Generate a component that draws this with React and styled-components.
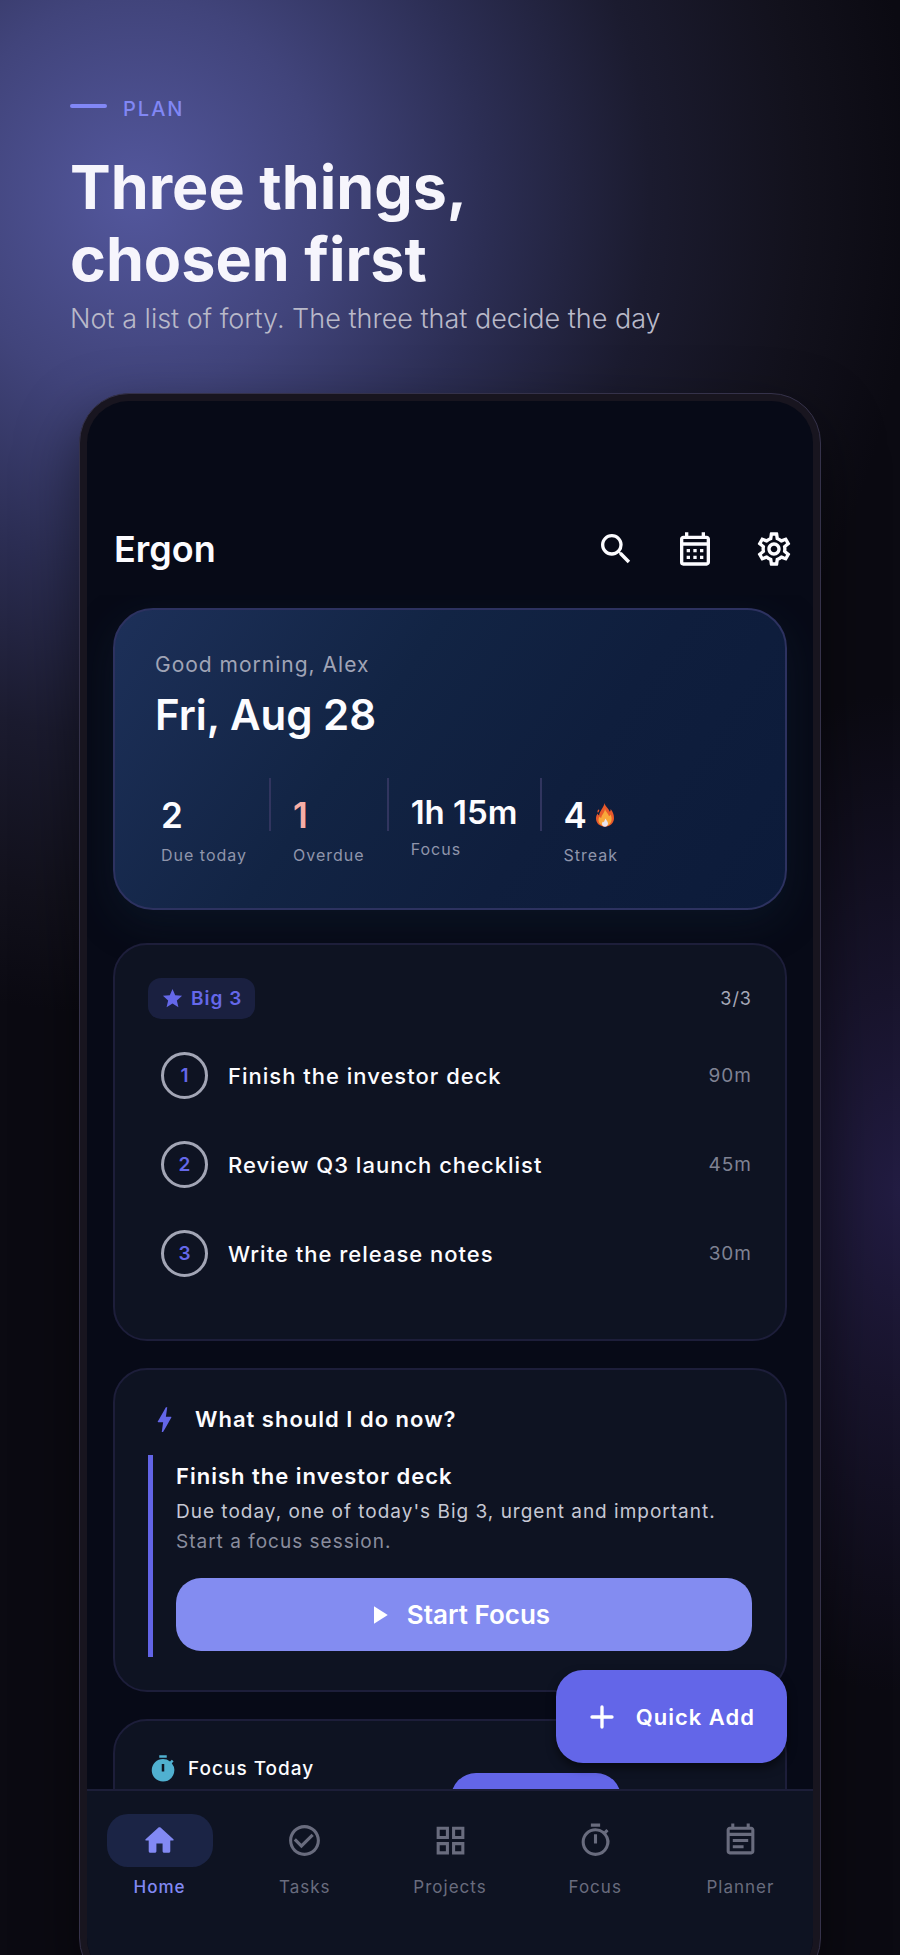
import React from 'react'
import styled, { createGlobalStyle } from 'styled-components'
import {
  MdSearch,
  MdOutlineCalendarMonth,
  MdOutlineSettings,
  MdStar,
  MdBolt,
  MdPlayArrow,
  MdTimer,
  MdOutlineTimer,
  MdCheckCircleOutline,
  MdOutlineGridView,
  MdOutlineEventNote,
} from 'react-icons/md'

const GlobalStyle = createGlobalStyle`
  * {
    box-sizing: border-box;
  }
  body {
    margin: 0;
    background: #0b0a12;
  }
  h1, h2, h3, p, ol, dl, dd {
    margin: 0;
    padding: 0;
  }
  button {
    border: none;
    padding: 0;
    font-family: inherit;
    cursor: pointer;
  }
  svg {
    display: block;
    flex: none;
  }
`

const Page = styled.div`
  display: flex;
  flex-direction: column;
  height: 100vh;
  overflow: hidden;
  background:
    radial-gradient(ellipse 300px 500px at 100% 61%, #221c42 0%, #18142c 40%, transparent 100%),
    radial-gradient(ellipse 780px 820px at 15% 10%, #53579d 0%, #41447b 24%, #2c2e54 45%, #1b1b2f 66%, #12111c 86%, transparent 100%),
    #0b0a12;
  font-family: Inter, "Liberation Sans", sans-serif;
`

const Intro = styled.header`
  padding: 95px 70px 0;
`

const Eyebrow = styled.p`
  display: flex;
  align-items: center;
  gap: 16px;
  color: #8187f5;
  font-size: 20px;
  font-weight: 500;
  line-height: 28px;
  letter-spacing: 2px;
`

const Dash = styled.span`
  width: 37px;
  height: 4px;
  margin-bottom: 6px;
  border-radius: 2px;
  background: #8187f5;
`

const Headline = styled.h1`
  margin-top: 28px;
  color: #f6f5fc;
  font-size: 61px;
  font-weight: 700;
  line-height: 72px;
`

const Tagline = styled.p`
  margin-top: 6px;
  color: #b9b9c9;
  font-size: 27px;
  font-weight: 300;
  line-height: 36px;
`

const Phone = styled.main`
  display: flex;
  flex: 1;
  min-height: 0;
  margin: 56px 79px -33px;
  padding: 7px;
  border: 1px solid #35324a;
  border-radius: 50px;
  background: #18151f;
  box-shadow: 0 24px 60px rgba(0, 0, 0, 0.5);
`

const Screen = styled.div`
  display: flex;
  flex: 1;
  flex-direction: column;
  min-width: 0;
  overflow: hidden;
  border-radius: 42px;
  background: #070a17;
  color: #fcfcff;
`

const AppBar = styled.div`
  display: flex;
  align-items: center;
  height: 194px;
  flex: none;
  padding: 102px 0 0 27px;
`

const AppName = styled.h2`
  flex: 1;
  font-size: 36px;
  font-weight: 600;
  line-height: 44px;
`

const IconButton = styled.button`
  display: flex;
  align-items: center;
  justify-content: center;
  width: 79px;
  height: 80px;
  background: none;
  color: #fcfcff;
  font-size: 40px;
`

const Body = styled.div`
  position: relative;
  display: flex;
  flex: 1;
  min-height: 0;
`

const Feed = styled.div`
  flex: 1;
  min-width: 0;
  padding: 13px 26px 0;
  overflow: hidden;
`

const Hero = styled.section`
  margin-bottom: 33px;
  padding: 40px 40px 41px;
  border: 2px solid #2d3260;
  border-radius: 40px;
  background: linear-gradient(125deg, #1d3059 0%, #122444 38%, #0f1e3d 65%, #0c1b3a 100%);
  box-shadow: 0 13px 40px rgba(18, 40, 60, 0.35);
`

const Greeting = styled.p`
  color: #a0a4b6;
  font-size: 21px;
  line-height: 30px;
  letter-spacing: 1px;
`

const Today = styled.h2`
  margin-top: 10px;
  font-size: 42px;
  font-weight: 600;
  line-height: 50px;
`

const Stats = styled.dl`
  display: flex;
  align-items: flex-start;
  gap: 22px;
  margin-top: 38px;
  padding-left: 6px;
`

const Divider = styled.span`
  width: 2px;
  height: 53px;
  background: #31355f;
`

const Stat = styled.div`
  display: flex;
  flex-direction: column-reverse;
  gap: 6px;
  padding-top: 15px;
`

const StatValue = styled.dd`
  display: flex;
  align-items: center;
  gap: 8px;
  color: ${(props) => (props.$alert ? '#f7aea6' : '#fcfcff')};
  font-size: ${(props) => (props.$small ? '33px' : '35px')};
  font-weight: 600;
  line-height: ${(props) => (props.$small ? '38px' : '44px')};
`

const StatLabel = styled.dt`
  color: #8f95ab;
  font-size: 16px;
  line-height: 24px;
  letter-spacing: 1px;
`

const Card = styled.section`
  margin-bottom: 27px;
  padding: 33px;
  border: 2px solid #1d1e3a;
  border-radius: 34px;
  background: #0e1322;
`

const BigThreeHead = styled.div`
  display: flex;
  align-items: center;
  justify-content: space-between;
  margin-bottom: 12px;
`

const Chip = styled.h3`
  display: flex;
  align-items: center;
  gap: 7px;
  height: 41px;
  padding: 0 13px;
  border-radius: 13px;
  background: #1a2040;
  color: #6568ea;
  font-size: 19px;
  font-weight: 600;
  letter-spacing: 1px;
`

const Count = styled.span`
  color: #a6a9b8;
  font-size: 18px;
  letter-spacing: 1px;
`

const TaskList = styled.ol`
  padding-bottom: 8px;
  list-style: none;
`

const Task = styled.li`
  display: flex;
  align-items: center;
  gap: 20px;
  height: 89px;
  padding-left: 13px;
`

const Ring = styled.button`
  width: 47px;
  height: 47px;
  border: 3px solid #a2a5b5;
  border-radius: 50%;
  background: none;
  color: #6568ea;
  font-size: 19px;
  font-weight: 600;
`

const TaskName = styled.span`
  flex: 1;
  font-size: 22px;
  font-weight: 500;
  letter-spacing: 1px;
`

const Duration = styled.span`
  color: #7f8293;
  font-size: 19px;
  letter-spacing: 1px;
`

const CardTitle = styled.h3`
  display: flex;
  align-items: center;
  gap: ${(props) => (props.$small ? '10px' : '14px')};
  font-size: ${(props) => (props.$small ? '19px' : '22px')};
  font-weight: ${(props) => (props.$small ? 500 : 600)};
  line-height: ${(props) => (props.$small ? '30px' : '33px')};
  letter-spacing: 1px;
`

const Suggestion = styled.div`
  margin-top: 19px;
  padding: 6px 0 6px 23px;
  border-left: 5px solid #6264e6;
`

const SuggestionTitle = styled.h3`
  margin-bottom: 6px;
  font-size: 22px;
  font-weight: 600;
  line-height: 30px;
  letter-spacing: 1px;
`

const Reason = styled.p`
  color: ${(props) => (props.$muted ? '#8a8d9e' : '#c6c8d4')};
  font-size: 19px;
  line-height: 30px;
  letter-spacing: 1px;
`

const StartButton = styled.button`
  display: flex;
  align-items: center;
  justify-content: center;
  gap: 13px;
  width: 100%;
  height: 73px;
  margin-top: 21px;
  padding-right: 14px;
  border-radius: 25px;
  background: #838cf1;
  color: #ffffff;
  font-size: 26px;
  font-weight: 600;
`

const FocusGrid = styled.div`
  display: grid;
  grid-template-columns: 1fr 170px 131px;
  align-items: start;
`

const FocusButton = styled.button`
  height: 60px;
  margin-top: 19px;
  border-radius: 25px;
  background: #6366e8;
`

const QuickAdd = styled.button`
  position: absolute;
  right: 26px;
  bottom: 26px;
  display: flex;
  align-items: center;
  gap: 14px;
  height: 93px;
  padding: 0 32px 0 26px;
  border-radius: 27px;
  background: #6366e8;
  box-shadow: 0 5px 10px rgba(0, 0, 0, 0.5);
  color: #ffffff;
  font-size: 22px;
  font-weight: 600;
  letter-spacing: 1px;
`

const NavBar = styled.nav`
  display: flex;
  flex: none;
  height: 191px;
  padding-top: 23px;
  border-top: 2px solid #1c1e38;
  background: #0e1322;
`

const NavItem = styled.a`
  display: flex;
  flex: 1;
  flex-direction: column;
  align-items: center;
  gap: 8px;
  color: ${(props) => (props.$active ? '#8289f4' : '#696c7e')};
  font-size: 17px;
  font-weight: ${(props) => (props.$active ? 500 : 400)};
  line-height: 24px;
  letter-spacing: 1px;
  text-decoration: none;
`

const NavPill = styled.span`
  display: flex;
  align-items: center;
  justify-content: center;
  width: 106px;
  height: 53px;
  border-radius: 21px;
  background: ${(props) => (props.$active ? '#1b2445' : 'transparent')};
  font-size: 37px;
`

const HomeIcon = () => (
  <svg width="1em" height="1em" viewBox="0 0 24 24" fill="currentColor">
    <path d="M10 19v-5h4v5c0 .55.45 1 1 1h3c.55 0 1-.45 1-1v-7h1.700c.46 0 .68-.57.33-.87L12.670 3.600c-.38-.34-.96-.34-1.340 0l-8.360 7.530c-.34.3-.13.87.33.87H5v7c0 .55.45 1 1 1h3c.55 0 1-.45 1-1z" />
  </svg>
)

const PlusIcon = () => (
  <svg width="40" height="40" viewBox="0 0 24 24" fill="none" stroke="currentColor" strokeWidth="2" strokeLinecap="round">
    <path d="M12 6v12M6 12h12" />
  </svg>
)

const Flame = () => (
  <svg width="20" height="24" viewBox="0 0 20 24">
    <path fill="#e8592b" d="M9.500 0c.5 3.500 4 5 5.300 8.700.6-.6.9-1.400.8-2.700 2.200 2.600 3.400 5.800 3.400 9 0 5.300-4 8.700-9 8.700S1 20.300 1 15.500c0-1.900.6-3.500 1.600-5 .3 1 .8 1.600 1.500 2C4.500 7.500 8.800 5 9.500 0z" />
    <path fill="#e8592b" d="M4 6.200c.6 1.300.2 2.300-1.200 3.500-.8-1.500-.3-2.600 1.200-3.500z" />
    <path fill="#f9a83a" d="M10 6c.6 3 3.600 4.500 4 7.300.8-.4 1.200-1 1.400-1.800 1 1.800 1.400 3.300 1.200 5-.4 4-3.200 6.500-6.600 6.500s-6.500-2.400-6.500-6c0-1.400.4-2.500 1.200-3.500.3.800.8 1.300 1.500 1.500C6.600 11.500 9.500 10 10 6z" />
    <path fill="#e9e4ee" d="M10.500 15.500c.4 1.500 2.500 2.700 2.500 5 0 2-1.300 3.200-3 3.200s-3-1.200-3-3c0-1 .4-1.700 1-2.300.3.500.6.8 1 .9.200-1.400.9-2.300 1.500-3.800z" />
  </svg>
)

const tasks = [
  { name: 'Finish the investor deck', duration: '90m' },
  { name: 'Review Q3 launch checklist', duration: '45m' },
  { name: 'Write the release notes', duration: '30m' },
]

const tabs = [
  { label: 'Home', icon: HomeIcon, active: true },
  { label: 'Tasks', icon: MdCheckCircleOutline },
  { label: 'Projects', icon: MdOutlineGridView },
  { label: 'Focus', icon: MdOutlineTimer },
  { label: 'Planner', icon: MdOutlineEventNote },
]

const HeroCard = () => (
  <Hero>
    <Greeting>Good morning, Alex</Greeting>
    <Today>Fri, Aug 28</Today>
    <Stats>
      <Stat>
        <StatLabel>Due today</StatLabel>
        <StatValue>2</StatValue>
      </Stat>
      <Divider />
      <Stat>
        <StatLabel>Overdue</StatLabel>
        <StatValue $alert>1</StatValue>
      </Stat>
      <Divider />
      <Stat>
        <StatLabel>Focus</StatLabel>
        <StatValue $small>1h 15m</StatValue>
      </Stat>
      <Divider />
      <Stat>
        <StatLabel>Streak</StatLabel>
        <StatValue>4 <Flame /></StatValue>
      </Stat>
    </Stats>
  </Hero>
)

const BigThree = () => (
  <Card>
    <BigThreeHead>
      <Chip><MdStar size={23} /> Big 3</Chip>
      <Count>3/3</Count>
    </BigThreeHead>
    <TaskList>
      {tasks.map((task, i) => (
        <Task key={task.name}>
          <Ring aria-label={`Complete ${task.name}`}>{i + 1}</Ring>
          <TaskName>{task.name}</TaskName>
          <Duration>{task.duration}</Duration>
        </Task>
      ))}
    </TaskList>
  </Card>
)

const NextUp = () => (
  <Card>
    <CardTitle><MdBolt size={33} color="#6366e8" /> What should I do now?</CardTitle>
    <Suggestion>
      <SuggestionTitle>Finish the investor deck</SuggestionTitle>
      <Reason>Due today, one of today's Big 3, urgent and important.</Reason>
      <Reason $muted>Start a focus session.</Reason>
      <StartButton><MdPlayArrow size={30} /> Start Focus</StartButton>
    </Suggestion>
  </Card>
)

const FocusToday = () => (
  <Card>
    <FocusGrid>
      <CardTitle $small><MdTimer size={30} color="#50b0d0" /> Focus Today</CardTitle>
      <FocusButton aria-label="Start" />
    </FocusGrid>
  </Card>
)

const App = () => {
  return (
    <Page>
      <GlobalStyle />
      <Intro>
        <Eyebrow><Dash />PLAN</Eyebrow>
        <Headline>Three things,<br />chosen first</Headline>
        <Tagline>Not a list of forty. The three that decide the day</Tagline>
      </Intro>
      <Phone>
        <Screen>
          <AppBar>
            <AppName>Ergon</AppName>
            <IconButton aria-label="Search"><MdSearch /></IconButton>
            <IconButton aria-label="Calendar"><MdOutlineCalendarMonth /></IconButton>
            <IconButton aria-label="Settings"><MdOutlineSettings /></IconButton>
          </AppBar>
          <Body>
            <Feed>
              <HeroCard />
              <BigThree />
              <NextUp />
              <FocusToday />
            </Feed>
            <QuickAdd><PlusIcon /> Quick Add</QuickAdd>
          </Body>
          <NavBar>
            {tabs.map(({ label, icon: Icon, active }) => (
              <NavItem key={label} href="#" $active={active}>
                <NavPill $active={active}><Icon /></NavPill>
                {label}
              </NavItem>
            ))}
          </NavBar>
        </Screen>
      </Phone>
    </Page>
  )
}

export default App
